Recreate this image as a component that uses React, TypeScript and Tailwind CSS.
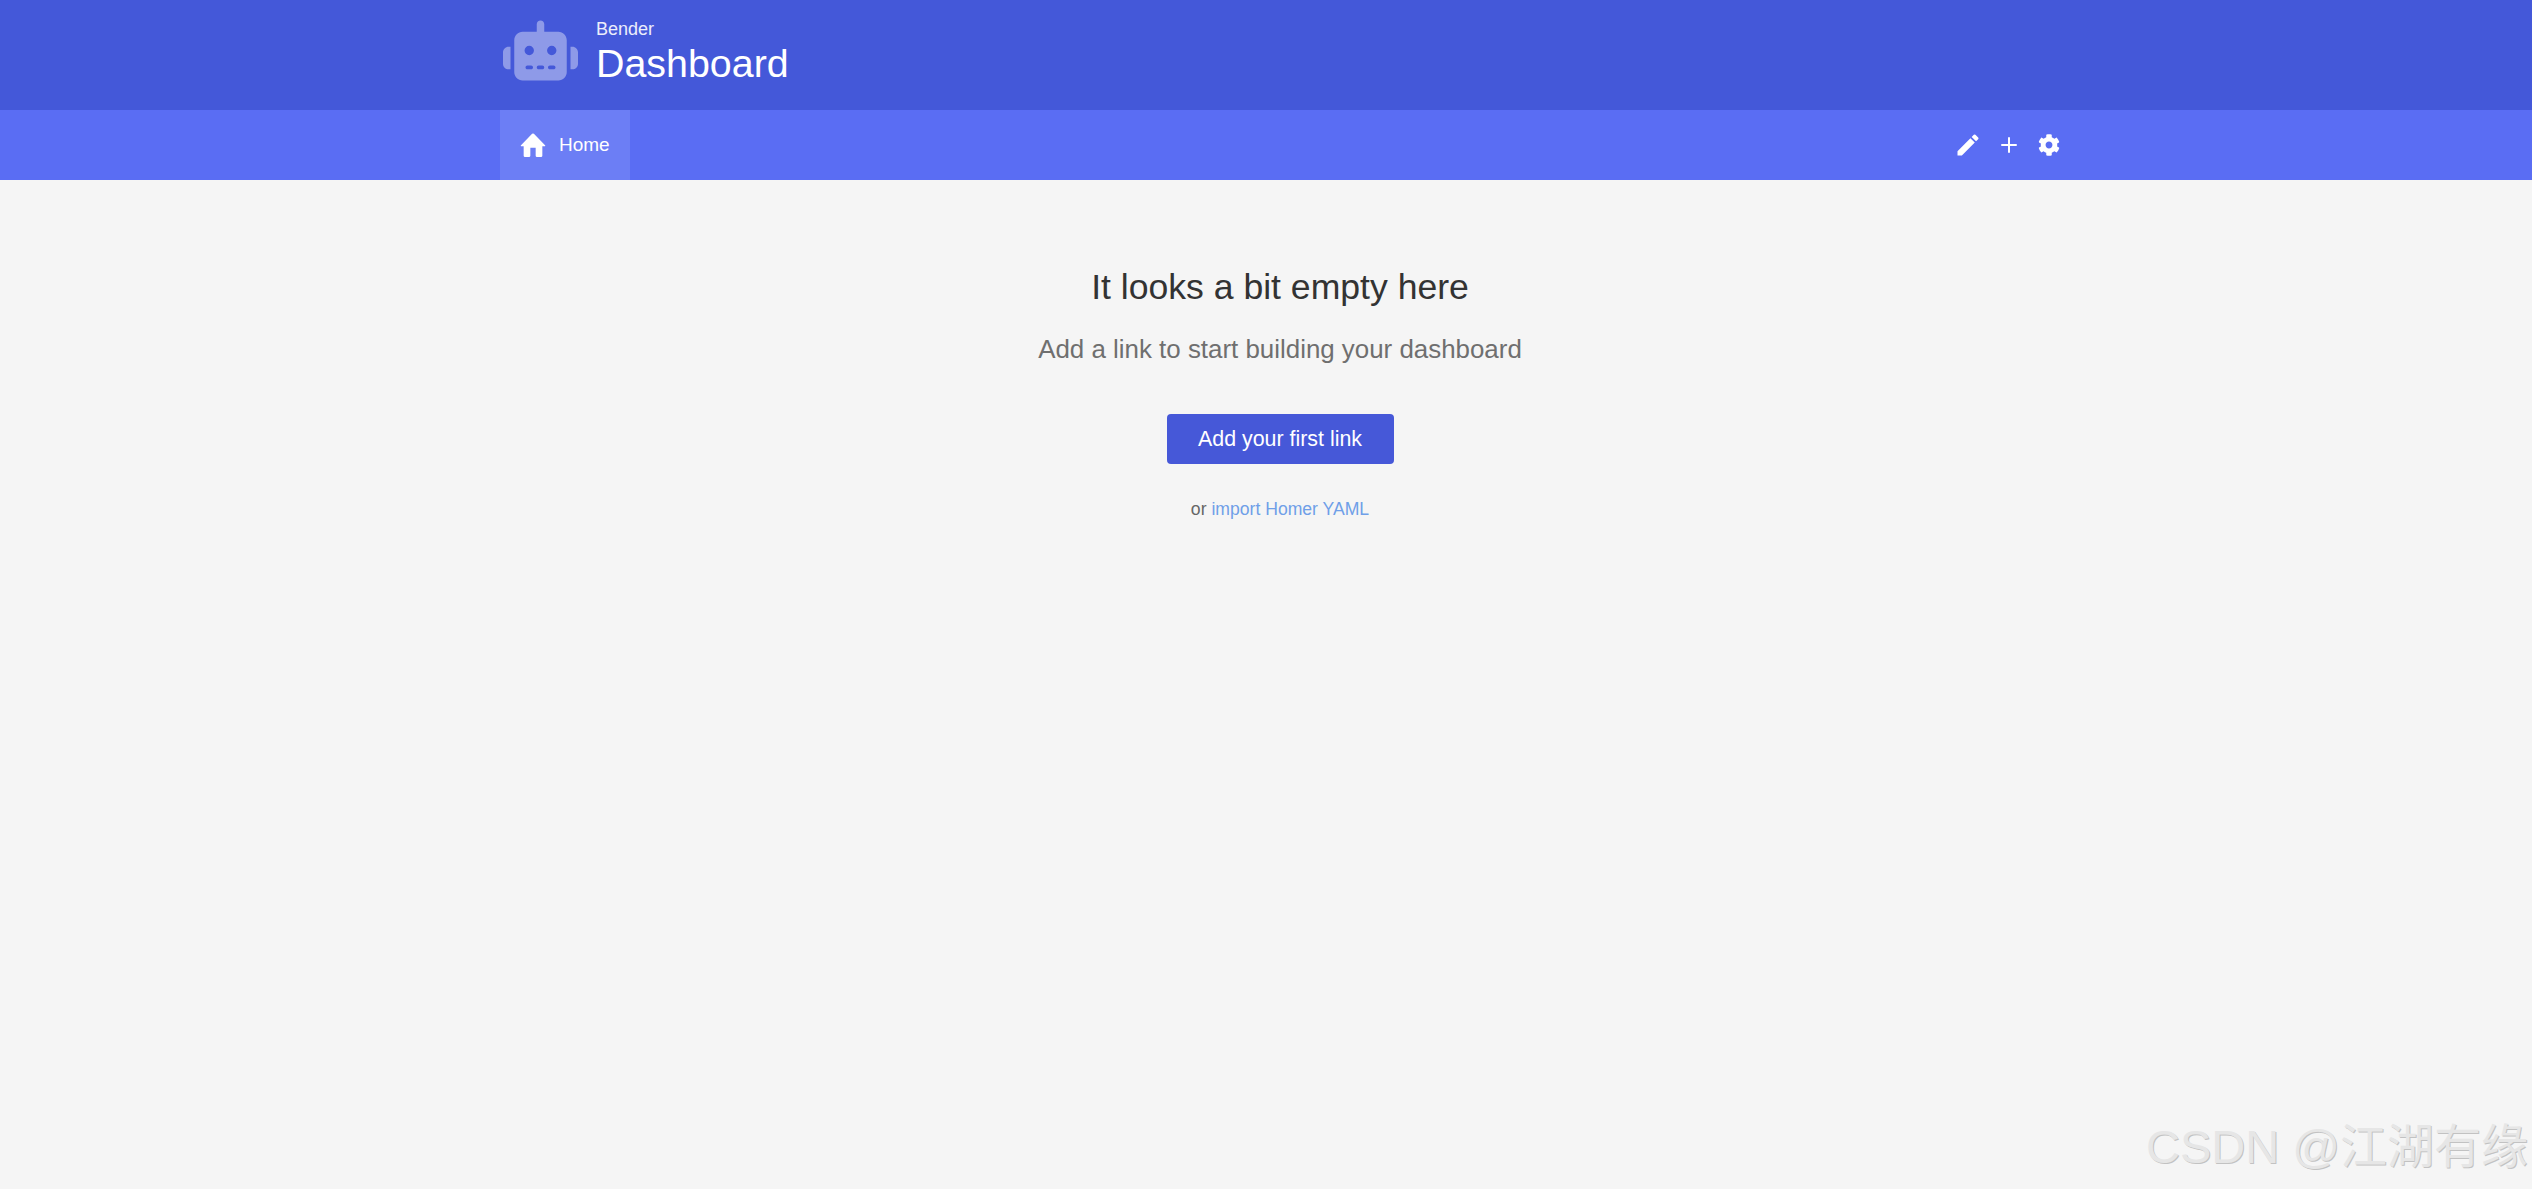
import { FaCog } from 'react-icons/fa'
import { FaRobot } from 'react-icons/fa6'
import { MdEdit } from 'react-icons/md'
import { Plus } from 'lucide-react'

const App = () => {
  return (
    <div className="relative flex h-[1189px] flex-col overflow-hidden bg-[#f5f5f5] font-['Liberation_Sans',Arial,sans-serif]">
      {/* Header */}
      <header className="h-[110px] bg-[#4458d9] pl-[503px]">
        <div className="flex items-center pt-[13px]">
          <FaRobot size={75} className="text-white/40" />
          <div className="ml-[18px] mt-[3px] text-white">
            <div className="text-[18px] leading-[20px] text-white/90">Bender</div>
            <div className="mt-[2px] text-[39.4px] leading-[44px]">Dashboard</div>
          </div>
        </div>
      </header>

      {/* Nav */}
      <nav className="flex h-[70px] items-center justify-between bg-[#5a6df3] pl-[500px] pr-[472px]">
        <a className="flex h-full w-[130px] items-center bg-[#6c7ef5] pl-[20px] text-white">
          <svg viewBox="0 0 24 24" className="-ml-[3px] h-[32px] w-[32px] fill-white">
            <path d="M10 20v-6h4v6a1 1 0 0 0 1 1h3a1 1 0 0 0 1-1v-7h1.7c.46 0 .68-.57.33-.87L12.67 3.6a1 1 0 0 0-1.34 0L3 12.13c-.35.3-.13.87.33.87H5v7a1 1 0 0 0 1 1h3a1 1 0 0 0 1-1z" />
          </svg>
          <span className="ml-[10px] text-[19px]">Home</span>
        </a>
        <div className="-mt-[1px] flex items-center gap-[15px] text-white">
          <MdEdit size={28} />
          <Plus size={24} strokeWidth={2} />
          <FaCog size={22} className="ml-[2px]" />
        </div>
      </nav>

      {/* Empty state */}
      <main className="flex flex-col items-center pl-[28px] pt-[85px]">
        <h1 className="text-[35.6px] leading-[44px] text-[#333333]">It looks a bit empty here</h1>
        <p className="mt-[24px] text-[25.9px] leading-[32px] text-[#6f6f6f]">Add a link to start building your dashboard</p>
        <button className="mt-[49px] h-[50px] w-[227px] rounded-[4px] bg-[#4658d8] text-[21.4px] text-white">Add your first link</button>
        <p className="mt-[35px] text-[17.6px] leading-[20px] text-[#666666]">
          or <a className="text-[#6f9fe8]">import Homer YAML</a>
        </p>
      </main>

      {/* Watermark */}
      <div className="absolute bottom-[12px] right-[4px] font-['Liberation_Sans','Noto_Sans_CJK_SC',sans-serif] text-[47px] leading-[60px] text-[#e6e6e6] [text-shadow:1px_1px_0_#c2c2c2]">
        CSDN @江湖有缘
      </div>
    </div>
  )
}

export default App
